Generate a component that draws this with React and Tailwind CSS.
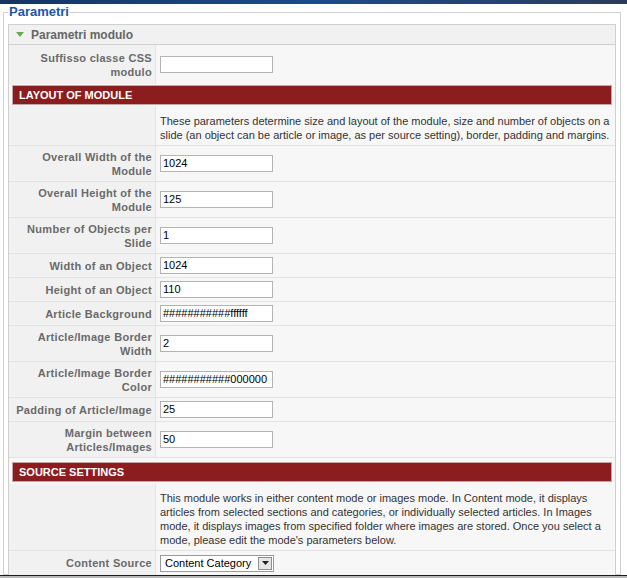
import React from 'react';

// righe della tabella parametri
const layoutRows = [
  { label: ['Overall Width of the', 'Module'], value: '1024' },
  { label: ['Overall Height of the', 'Module'], value: '125' },
  { label: ['Number of Objects per', 'Slide'], value: '1' },
  { label: ['Width of an Object'], value: '1024' },
  { label: ['Height of an Object'], value: '110' },
  { label: ['Article Background'], value: '###########ffffff' },
  { label: ['Article/Image Border', 'Width'], value: '2' },
  { label: ['Article/Image Border', 'Color'], value: '###########000000' },
  { label: ['Padding of Article/Image'], value: '25' },
  { label: ['Margin between', 'Articles/Images'], value: '50' },
];

function TextInput({ value }) {
  return (
    <div className="w-[113px] h-[17px] bg-white border border-[#b4b4b4] text-[11px] leading-[15px] text-black pl-[2px] overflow-hidden whitespace-nowrap">
      {value}
    </div>
  );
}

function ParamRow({ label, value }) {
  const tall = label.length > 1;
  return (
    <div className={`flex ${tall ? 'h-[36px]' : 'h-[24px]'}`}>
      <div className="w-[147px] shrink-0 bg-[#f1f1f1] border-r border-b border-[#e3e3e3] flex flex-col justify-center items-end pr-[3px] text-[11px] leading-[14px] font-bold tracking-[0.3px] text-[#6a6a6a]">
        {label.map((l) => (
          <span key={l}>{l}</span>
        ))}
      </div>
      <div className="flex-1 border-b border-[#e3e3e3] flex items-center pl-[4px]">
        <TextInput value={value} />
      </div>
    </div>
  );
}

function SectionBar({ title, extra }) {
  return (
    <div className={`mx-[3px] h-[20px] bg-[#8b1d1f] border border-[#c9a6a6] flex items-center pl-[6px] text-white text-[11px] font-bold ${extra}`}>
      {title}
    </div>
  );
}

export default function App() {
  return (
    <div className="w-[627px] h-[578px] bg-white overflow-hidden font-['Liberation_Sans',Arial,sans-serif] flex flex-col">
      {/* striscia immagine in alto */}
      <div className="h-[4px] shrink-0 bg-gradient-to-r from-[#143566] via-[#1d4a8c] to-[#2a3c5c]" />

      <fieldset className="ml-[3px] mr-[6px] border border-[#cfcfcf] px-[4px] pb-0 flex-1 min-h-0">
        <legend className="px-[1px] text-[13px] leading-[16px] font-bold text-[#1a56a8]">Parametri</legend>

        <div className="mt-[4px] border border-[#cfcfcf] bg-[#f7f7f7] h-[600px]">
          {/* intestazione pannello */}
          <div className="h-[20px] bg-[#f1f1f1] border-b border-[#cfcfcf] flex items-center pl-[7px] gap-[7px]">
            <svg width="8" height="6" viewBox="0 0 8 6">
              <path d="M0 0 L8 0 L4 5 Z" fill="#6aa84f" />
            </svg>
            <span className="text-[12px] font-bold text-[#666]">Parametri modulo</span>
          </div>

          <div className="flex h-[39px]">
            <div className="w-[147px] shrink-0 bg-[#f1f1f1] border-r border-[#e3e3e3] flex flex-col justify-center items-end pr-[3px] text-[11px] leading-[14px] font-bold tracking-[0.3px] text-[#6a6a6a]">
              <span>Suffisso classe CSS</span>
              <span>modulo</span>
            </div>
            <div className="flex-1 flex items-center pl-[4px]">
              <TextInput value="" />
            </div>
          </div>

          <SectionBar title="LAYOUT OF MODULE" extra="mt-[1px] mb-[1px]" />

          <div className="flex h-[40px]">
            <div className="w-[147px] shrink-0 bg-[#f1f1f1] border-r border-b border-[#e3e3e3]" />
            <div className="flex-1 border-b border-[#e3e3e3] pl-[4px] pt-[8px] text-[11px] leading-[14px] text-[#333] whitespace-nowrap">
              These parameters determine size and layout of the module, size and number of objects on a
              <br />
              slide (an object can be article or image, as per source setting), border, padding and margins.
            </div>
          </div>

          {layoutRows.map((r) => (
            <ParamRow key={r.label.join(' ')} label={r.label} value={r.value} />
          ))}

          <SectionBar title="SOURCE SETTINGS" extra="mt-[4px] mb-[2px]" />

          <div className="flex h-[67px]">
            <div className="w-[147px] shrink-0 bg-[#f1f1f1] border-r border-b border-[#e3e3e3]" />
            <div className="flex-1 border-b border-[#e3e3e3] pl-[4px] pt-[7px] text-[11px] leading-[14px] text-[#333] whitespace-nowrap">
              This module works in either content mode or images mode. In Content mode, it displays
              <br />
              articles from selected sections and categories, or individually selected articles. In Images
              <br />
              mode, it displays images from specified folder where images are stored. Once you select a
              <br />
              mode, please edit the mode's parameters below.
            </div>
          </div>

          <div className="flex h-[24px]">
            <div className="w-[147px] shrink-0 bg-[#f1f1f1] border-r border-[#e3e3e3] flex items-center justify-end pr-[3px] text-[11px] font-bold tracking-[0.3px] text-[#6a6a6a]">
              Content Source
            </div>
            <div className="flex-1 flex items-center pl-[4px]">
              <div className="w-[114px] h-[17px] bg-white border border-[#9a9a9a] flex items-center justify-between text-[11px] text-black pl-[4px] pr-[1px]">
                <span>Content Category</span>
                <span className="w-[14px] h-[13px] bg-[#e6e6e6] border border-[#8f8f8f] flex items-center justify-center">
                  <svg width="7" height="4" viewBox="0 0 7 4">
                    <path d="M0 0 L7 0 L3.5 4 Z" fill="#222" />
                  </svg>
                </span>
              </div>
            </div>
          </div>
        </div>
      </fieldset>

      {/* bordo inferiore finestra */}
      <div className="h-[1px] shrink-0 bg-[#1a1a1a]" />
      <div className="h-[2px] shrink-0 bg-[#b8b8b8]" />
    </div>
  );
}
